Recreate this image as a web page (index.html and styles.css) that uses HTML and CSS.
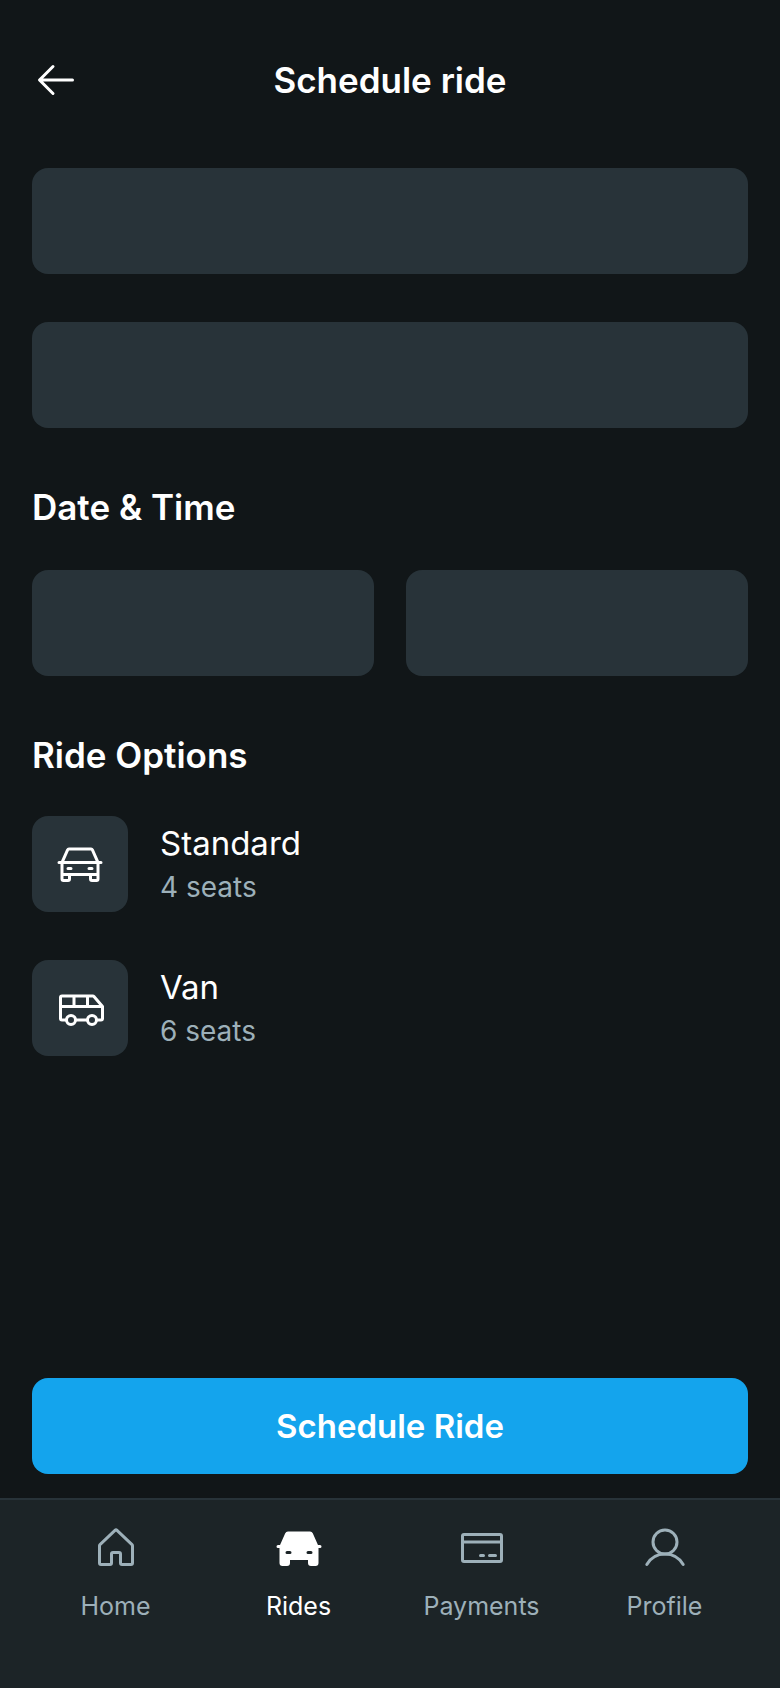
FILE: index.html
```html
<!DOCTYPE html>
<html lang="en">
<head>
<meta charset="utf-8">
<meta name="viewport" content="width=device-width, initial-scale=1">
<title>Schedule ride</title>
<link rel="stylesheet" href="styles.css">
</head>
<body>
<div class="screen">
  <header class="header">
    <button class="back" type="button" aria-label="Back">
      <svg class="icon" viewBox="0 0 256 256" fill="currentColor" aria-hidden="true"><path d="M224,128a8,8,0,0,1-8,8H59.31l58.35,58.34a8,8,0,0,1-11.32,11.32l-72-72a8,8,0,0,1,0-11.32l72-72a8,8,0,0,1,11.32,11.32L59.31,120H216A8,8,0,0,1,224,128Z"/></svg>
    </button>
    <h1 class="title">Schedule ride</h1>
  </header>
  <main class="content">
    <form class="form" id="ride-form">
      <div class="places">
        <input class="field" type="text" aria-label="Pickup location">
        <input class="field" type="text" aria-label="Destination">
      </div>
      <h2 class="heading">Date &amp; Time</h2>
      <div class="when">
        <input class="field" type="text" aria-label="Date">
        <input class="field" type="text" aria-label="Time">
      </div>
    </form>
    <h2 class="heading">Ride Options</h2>
    <ul class="options">
      <li class="option">
        <span class="tile"><svg class="icon" viewBox="0 0 256 256" fill="currentColor" aria-hidden="true"><path d="M240,112H229.2L201.42,49.5A16,16,0,0,0,186.8,40H69.2a16,16,0,0,0-14.62,9.5L26.8,112H16a8,8,0,0,0,0,16h8v80a16,16,0,0,0,16,16H64a16,16,0,0,0,16-16V192h96v16a16,16,0,0,0,16,16h24a16,16,0,0,0,16-16V128h8a8,8,0,0,0,0-16ZM69.2,56H186.8l24.89,56H44.31ZM64,208H40V192H64Zm128,0V192h24v16Zm24-32H40V128H216ZM56,152a8,8,0,0,1,8-8H80a8,8,0,0,1,0,16H64A8,8,0,0,1,56,152Zm112,0a8,8,0,0,1,8-8h16a8,8,0,0,1,0,16H176A8,8,0,0,1,168,152Z"/></svg></span>
        <div class="details"><p class="name">Standard</p><p class="seats">4 seats</p></div>
      </li>
      <li class="option">
        <span class="tile"><svg class="icon line" viewBox="0 0 256 256" aria-hidden="true"><path d="M56,192H32a8,8,0,0,1-8-8V72a8,8,0,0,1,8-8H196.3a8,8,0,0,1,6.1,2.8L248,120v64a8,8,0,0,1-8,8H216M168,192H104M24,120H248M96,64v56M168,64v56"/><circle cx="80" cy="192" r="24"/><circle cx="192" cy="192" r="24"/></svg></span>
        <div class="details"><p class="name">Van</p><p class="seats">6 seats</p></div>
      </li>
    </ul>
  </main>
  <div class="action"><button class="submit" type="submit" form="ride-form">Schedule Ride</button></div>
  <nav class="tabs" aria-label="Main">
    <a class="tab" href="#home"><span class="tab-icon"><svg class="icon line" viewBox="0 0 256 256" aria-hidden="true"><path d="M152,208V160a8,8,0,0,0-8-8H112a8,8,0,0,0-8,8v48a8,8,0,0,1-8,8H48a8,8,0,0,1-8-8V115.5a8,8,0,0,1,2.6-5.9l80-75.5a8,8,0,0,1,10.8,0l80,75.5a8,8,0,0,1,2.6,5.9V208a8,8,0,0,1-8,8H160A8,8,0,0,1,152,208Z"/></svg></span>Home</a>
    <a class="tab active" href="#rides" aria-current="page"><span class="tab-icon"><svg class="icon" viewBox="0 0 256 256" fill="currentColor" aria-hidden="true"><path d="M240,112H229.2L201.42,49.5A16,16,0,0,0,186.8,40H69.2a16,16,0,0,0-14.62,9.5L26.8,112H16a8,8,0,0,0,0,16h8v80a16,16,0,0,0,16,16H64a16,16,0,0,0,16-16V192h96v16a16,16,0,0,0,16,16h24a16,16,0,0,0,16-16V128h8a8,8,0,0,0,0-16ZM80,160H64a8,8,0,0,1,0-16H80a8,8,0,0,1,0,16Zm112,0H176a8,8,0,0,1,0-16h16a8,8,0,0,1,0,16Z"/></svg></span>Rides</a>
    <a class="tab" href="#payments"><span class="tab-icon"><svg class="icon line" viewBox="0 0 256 256" aria-hidden="true"><rect x="24" y="56" width="208" height="144" rx="8"/><path d="M24,96H232M168,168h32M120,168h16"/></svg></span>Payments</a>
    <a class="tab" href="#profile"><span class="tab-icon"><svg class="icon line" viewBox="0 0 256 256" aria-hidden="true"><circle cx="128" cy="96" r="64"/><path d="M31,216a112,112,0,0,1,194,0"/></svg></span>Profile</a>
  </nav>
</div>
</body>
</html>
```
FILE: styles.css
```css
* { box-sizing: border-box; margin: 0; padding: 0; }

body {
  background: #111618;
  color: #fff;
  font-family: Inter, "Liberation Sans", sans-serif;
}

button, input { font: inherit; color: inherit; border: 0; }

.screen { min-height: 100vh; display: flex; flex-direction: column; }

.icon { display: block; width: 48px; height: 48px; }

.line {
  fill: none;
  stroke: currentColor;
  stroke-width: 16;
  stroke-linecap: round;
  stroke-linejoin: round;
}

.header {
  display: grid;
  grid-template-columns: 96px 1fr 96px;
  align-items: center;
  padding: 32px 32px 0;
}

.back {
  display: flex;
  align-items: center;
  height: 96px;
  background: none;
  cursor: pointer;
}

.title, .heading { font-size: 35px; line-height: 46px; font-weight: 600; }
.title { text-align: center; }

.content { flex: 1; padding: 40px 32px 24px; }

.places { display: grid; gap: 48px; }
.when { display: grid; grid-template-columns: 1fr 1fr; gap: 32px; margin-top: 40px; }

.field {
  width: 100%;
  min-width: 0;
  height: 106px;
  padding: 0 32px;
  border-radius: 16px;
  background: #283339;
  font-size: 32px;
}

.heading { padding-top: 56px; }

.options { display: grid; gap: 48px; margin-top: 38px; list-style: none; }
.option { display: flex; align-items: center; gap: 32px; }

.tile {
  display: grid;
  place-items: center;
  width: 96px;
  height: 96px;
  border-radius: 16px;
  background: #283339;
}

.name { font-size: 33px; line-height: 46px; }
.seats { font-size: 28px; line-height: 42px; color: #9db0b9; }

.action { padding: 0 32px 24px; }

.submit {
  width: 100%;
  height: 96px;
  border-radius: 16px;
  background: #14a4ed;
  font-size: 33px;
  font-weight: 600;
  cursor: pointer;
}

.tabs {
  display: grid;
  grid-template-columns: repeat(4, 1fr);
  gap: 16px;
  padding: 16px 32px 64px;
  border-top: 2px solid #283339;
  background: #1c2427;
}

.tab {
  display: flex;
  flex-direction: column;
  align-items: center;
  gap: 8px;
  font-size: 25px;
  line-height: 36px;
  color: #9db0b9;
  text-decoration: none;
}

.tab-icon { display: grid; place-items: center; height: 64px; }
.active { color: #fff; }
```
